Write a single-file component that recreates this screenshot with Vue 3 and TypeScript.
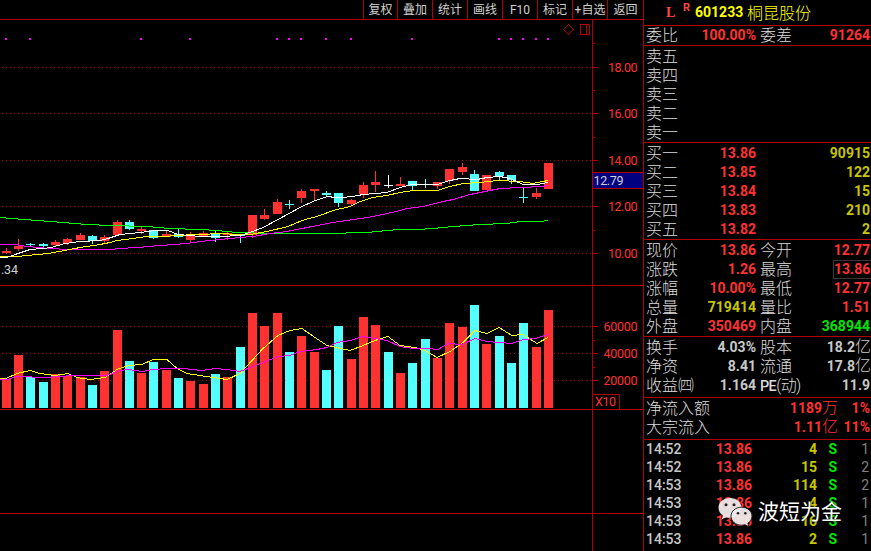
<script setup lang="ts">
type Candle = [x: number, top: number, bottom: number, high: number, low: number, volTop: number, tone: 'u' | 'd' | 'w']
interface Row { label: string; value: string; tone: string; label2?: string; value2?: string; tone2?: string; unit2?: string; boxed?: boolean; latin?: string }

const tools: string[] = ['复权', '叠加', '统计', '画线', 'F10', '标记', '+自选', '返回']

// x, body top, body bottom, wick top, wick bottom, volume top, direction
const candles: Candle[] = [
  [2, 251, 253, 248, 254, 379, 'u'], [14, 246, 249, 239, 251, 355, 'u'], [26, 244, 245, 243, 246, 377, 'd'],
  [39, 244, 246, 243, 247, 382, 'd'], [51, 242, 245, 240, 246, 374, 'u'], [63, 239, 243, 238, 245, 376, 'u'],
  [76, 235, 240, 233, 240, 377, 'u'], [88, 236, 241, 235, 244, 385, 'd'], [100, 237, 241, 235, 243, 371, 'u'],
  [113, 222, 235, 220, 235, 330, 'u'], [125, 222, 229, 220, 230, 361, 'd'], [137, 229, 231, 226, 234, 373, 'u'],
  [149, 230, 238, 230, 239, 362, 'd'], [162, 234, 237, 231, 237, 370, 'u'], [174, 234, 237, 229, 238, 378, 'd'],
  [186, 235, 240, 232, 242, 381, 'u'], [199, 233, 237, 231, 237, 384, 'u'], [211, 234, 238, 231, 242, 374, 'd'],
  [223, 233, 235, 232, 240, 377, 'u'], [236, 235, 236, 235, 243, 347, 'd'], [248, 215, 235, 215, 238, 313, 'u'],
  [260, 215, 219, 209, 220, 326, 'u'], [273, 202, 214, 199, 214, 313, 'u'], [285, 204, 205, 200, 209, 352, 'd'],
  [297, 191, 198, 189, 203, 336, 'u'], [310, 189, 191, 189, 200, 352, 'u'], [322, 193, 195, 191, 196, 370, 'd'],
  [334, 193, 203, 193, 207, 326, 'd'], [347, 200, 204, 199, 206, 359, 'u'], [359, 185, 194, 182, 198, 317, 'u'],
  [371, 182, 185, 171, 192, 325, 'u'], [384, 185, 186, 175, 188, 352, 'w'], [396, 184, 186, 177, 186, 373, 'u'],
  [408, 181, 186, 181, 190, 363, 'd'], [421, 184, 185, 179, 188, 339, 'd'], [433, 182, 186, 182, 189, 358, 'u'],
  [445, 169, 181, 169, 184, 323, 'u'], [458, 167, 172, 163, 175, 327, 'u'], [470, 174, 191, 170, 191, 305, 'd'],
  [482, 175, 190, 175, 190, 344, 'u'], [495, 172, 176, 171, 180, 336, 'd'], [507, 175, 180, 175, 184, 363, 'd'],
  [519, 197, 198, 187, 203, 323, 'd'], [532, 193, 197, 188, 199, 347, 'u'], [544, 163, 189, 163, 189, 310, 'u'],
]
const ink: Record<string, string> = { u: '#ff3232', d: '#54ffff', w: '#ffffff' }
const volInk = (c: Candle): string => (c[0] === 384 ? ink.d : ink[c[6]])

const lines: { color: string; points: string }[] = [
  { color: '#00ff00', points: '0,217 12,218 37,220 63,222 87,224 110,225 147,226 170,228 200,229 217,230 237,232 270,233 343,233 350,232 367,232 387,230 400,229 418,229 433,228 453,226 480,224 507,223 520,221 540,221 548,220' },
  { color: '#ff00ff', points: '0,244 15,244 27,246 50,248 67,249 110,249 120,248 137,247 160,245 187,243 200,241 220,239 240,237 253,236 270,233 287,231 307,227 333,222 347,220 367,217 383,214 400,210 407,208 423,206 443,201 453,199 470,194 490,190 500,188 520,187 543,186 548,185' },
  { color: '#ffff00', points: '0,256 17,256 27,255 48,253 65,250 80,247 100,244 110,242 117,240 133,238 147,236 167,236 173,235 200,234 220,233 237,234 250,234 267,231 288,226 302,220 320,215 333,210 350,206 360,201 373,197 387,195 400,192 413,190 437,190 450,186 463,183 480,182 497,180 520,181 533,183 548,180' },
  { color: '#ffffff', points: '0,257 7,257 15,254 30,249 43,248 51,247 58,245 65,243 80,241 100,240 108,238 120,234 130,233 140,232 155,230 168,230 178,234 190,235 200,236 220,236 240,235 250,232 263,227 278,219 300,207 315,200 328,196 335,197 342,197 353,196 363,194 387,192 400,187 412,184 437,184 450,180 460,178 477,179 487,177 500,176 510,178 523,184 537,184 548,182' },
  { color: '#ffff00', points: '0,378 6,378 17,373 30,370 40,373 55,375 68,373 77,377 90,379 105,377 117,369 128,365 142,364 153,359 167,359 177,368 187,373 200,375 213,377 227,379 240,373 252,360 263,348 278,335 290,330 302,328 315,337 327,345 350,350 363,345 375,340 388,336 400,345 415,347 425,350 437,357 450,351 463,342 475,330 487,333 499,327 512,335 523,334 537,343 548,337' },
  { color: '#ff00ff', points: '0,379 7,379 17,376 47,377 73,375 107,375 120,370 128,369 142,371 153,369 167,368 183,368 202,370 215,368 227,369 240,371 253,366 278,356 290,355 300,351 317,349 327,347 337,342 350,340 363,336 387,340 400,346 413,348 427,348 438,349 448,343 462,344 475,338 487,341 512,343 523,339 535,338 548,334' },
]

const gridRows: number[] = [67, 113, 160, 206, 253, 326, 353, 380]
const minorTicks: number[] = [43, 90, 137, 230, 340, 367]
const signals: number[] = [5, 29, 140, 189, 276, 288, 300, 325, 350, 411, 498, 510, 522, 535, 547]
const axis: { y: number; text: string }[] = [
  { y: 72, text: '18.00' }, { y: 118, text: '16.00' }, { y: 165, text: '14.00' }, { y: 211, text: '12.00' }, { y: 258, text: '10.00' },
  { y: 331, text: '60000' }, { y: 358, text: '40000' }, { y: 385, text: '20000' },
]

const blocks: Row[][] = [
  ['卖五', '卖四', '卖三', '卖二', '卖一'].map((label) => ({ label, value: '', tone: 'red' })),
  [
    { label: '买一', value: '13.86', tone: 'red', value2: '90915', tone2: 'olive' },
    { label: '买二', value: '13.85', tone: 'red', value2: '122', tone2: 'olive' },
    { label: '买三', value: '13.84', tone: 'red', value2: '15', tone2: 'olive' },
    { label: '买四', value: '13.83', tone: 'red', value2: '210', tone2: 'olive' },
    { label: '买五', value: '13.82', tone: 'red', value2: '2', tone2: 'olive' },
  ],
  [
    { label: '现价', value: '13.86', tone: 'red', label2: '今开', value2: '12.77', tone2: 'red' },
    { label: '涨跌', value: '1.26', tone: 'red', label2: '最高', value2: '13.86', tone2: 'red', boxed: true },
    { label: '涨幅', value: '10.00%', tone: 'red', label2: '最低', value2: '12.77', tone2: 'red' },
    { label: '总量', value: '719414', tone: 'olive', label2: '量比', value2: '1.51', tone2: 'red' },
    { label: '外盘', value: '350469', tone: 'red', label2: '内盘', value2: '368944', tone2: 'green' },
  ],
  [
    { label: '换手', value: '4.03%', tone: 'grey', label2: '股本', value2: '18.2', tone2: 'grey', unit2: '亿' },
    { label: '净资', value: '8.41', tone: 'grey', label2: '流通', value2: '17.8', tone2: 'grey', unit2: '亿' },
    { label: '收益㈣', value: '1.164', tone: 'grey', label2: '(动)', latin: 'PE', value2: '11.9', tone2: 'grey' },
  ],
]

const flows = [
  { label: '净流入额', value: '1189', unit: '万', share: '1%' },
  { label: '大宗流入', value: '1.11', unit: '亿', share: '11%' },
]

const trades = [
  { time: '14:52', volume: '4', count: '1' }, { time: '14:52', volume: '15', count: '2' },
  { time: '14:53', volume: '114', count: '2' }, { time: '14:53', volume: '4', count: '1' },
  { time: '14:53', volume: '16', count: '1' }, { time: '14:53', volume: '2', count: '1' },
]
</script>

<template>
  <div class="terminal">
    <main class="left">
      <nav class="toolbar">
        <button v-for="t in tools" :key="t" class="tool">{{ t }}</button>
      </nav>
      <svg class="chart" width="643" height="531" viewBox="0 20 643 531" shape-rendering="crispEdges">
        <path v-for="y in gridRows" :key="'g' + y" :d="`M2 ${y + 0.5}H592`" stroke="#b00000" stroke-dasharray="1 3" />
        <rect v-for="x in signals" :key="'s' + x" :x="x" y="38" width="2" height="2" fill="#ff00ff" />
        <g v-for="c in candles" :key="c[0]">
          <rect :x="c[0] + 4" :y="c[3]" width="1" :height="c[4] - c[3]" :fill="ink[c[6]]" />
          <rect :x="c[0]" :y="c[1]" width="9" :height="c[2] - c[1]" :fill="ink[c[6]]" />
          <rect :x="c[0]" :y="c[5]" width="9" :height="408 - c[5]" :fill="volInk(c)" />
        </g>
        <g transform="translate(0 .5)">
          <polyline v-for="(l, i) in lines" :key="'l' + i" :points="l.points" :stroke="l.color" fill="none" />
        </g>
        <g stroke="#b00000" fill="none">
          <path d="M592.5 20V551M0 285.5H643M0 409.5H643M0 513.5H643" />
          <path v-for="y in gridRows" :key="'t' + y" :d="`M593 ${y + 0.5}h5`" />
          <path v-for="y in minorTicks" :key="'m' + y" :d="`M593 ${y + 0.5}h2`" />
          <path d="M568.5 24.5L563.5 29.5L568.5 34.5L573.5 29.5Z" />
          <path d="M580.5 24.5H589.5V34.5H580.5ZM586.5 24V35" />
          <path d="M593 394.5H619.5V409" />
        </g>
        <rect x="592.5" y="172.5" width="51" height="16" fill="#000080" stroke="#b00000" />
        <g class="axis">
          <text v-for="a in axis" :key="a.text" :x="a.text.includes('.') ? 608 : 603.5" :y="a.y" :textLength="a.text.includes('.') ? 29.5 : 34">{{ a.text }}</text>
          <text x="595" y="406" textLength="21">X10</text>
          <text class="pale" x="593.5" y="184.5" textLength="30">12.79</text>
          <text class="pale" x="1" y="274" textLength="17">.34</text>
        </g>
      </svg>
    </main>

    <aside class="panel">
      <header class="title">
        <span class="mark-l">L</span><sup class="mark-r">R</sup><span class="code">601233</span><span class="name">桐昆股份</span>
      </header>
      <section class="block ratio">
        <div class="row">
          <span class="label">委比</span><b class="red">100.00%</b><span class="label second">委差</span><b class="red">91264</b>
        </div>
      </section>
      <section v-for="(rows, i) in blocks" :key="i" class="block" :class="'block-' + i">
        <div v-for="r in rows" :key="r.label" class="row">
          <span class="label">{{ r.label }}</span>
          <b :class="r.tone">{{ r.value }}</b>
          <span class="label second" :class="{ tight: r.latin }"><em v-if="r.latin">{{ r.latin }}</em>{{ r.label2 }}</span>
          <b :class="[r.tone2, { boxed: r.boxed, unitful: r.unit2 }]">{{ r.value2 }}<i v-if="r.unit2">{{ r.unit2 }}</i></b>
        </div>
      </section>
      <section class="block flows">
        <div v-for="f in flows" :key="f.label" class="row flow">
          <span class="label">{{ f.label }}</span><b class="red">{{ f.value }}<i>{{ f.unit }}</i></b><b class="red">{{ f.share }}</b>
        </div>
      </section>
      <section class="trades">
        <div v-for="(t, i) in trades" :key="i" class="trade">
          <b class="grey time">{{ t.time }}</b><b class="red">13.86</b><b class="olive">{{ t.volume }}</b><b class="green side">S</b><span class="count">{{ t.count }}</span>
        </div>
      </section>
    </aside>

    <div class="brand">
      <svg width="35" height="30" viewBox="0 0 35 30">
        <path d="M12 1C5.500 1 .5 5.300 .5 10.800c0 3.200 1.700 6 4.400 7.800L3.600 22.500l4.500-2.300c1.200.4 2.500.5 3.900.5 6.400 0 11.500-4.300 11.500-9.900S18.400 1 12 1Z" fill="#f2eaea" fill-opacity=".95" />
        <path d="M23.500 10.200c-5.900 0-10.500 4-10.500 9s4.600 9 10.500 9c1.200 0 2.300-.2 3.400-.5l4 2-1.100-3.500c2.600-1.600 4.200-4.100 4.200-7 0-5-4.600-9-10.500-9Z" fill="#f2eaea" fill-opacity=".95" stroke="#222" stroke-width="1" />
        <g fill="#222"><circle cx="8" cy="7.800" r="1.500" /><circle cx="16" cy="7.800" r="1.500" /><circle cx="20" cy="16.300" r="1.300" /><circle cx="27.300" cy="16.300" r="1.300" /></g>
      </svg>
      <span>波短为金</span>
    </div>
  </div>
</template>

<style>
body { background: #000; overflow: hidden; }
</style>

<style scoped>
.terminal { position: relative; display: flex; width: 871px; height: 551px; overflow: hidden; background: #000; color: #c0c0c0; font-family: Roboto, "Noto Sans CJK SC", sans-serif; }
.left { display: flex; flex-direction: column; width: 643px; }
.toolbar { display: flex; justify-content: flex-end; box-sizing: border-box; height: 20px; border-bottom: 1px solid #b00000; }
.tool { box-sizing: border-box; width: 35px; height: 19px; padding: 0; border: 0; border-left: 1px solid #b00000; background: none; color: #d0d0d0; font: 400 12px/18px Roboto, "Noto Sans CJK SC", sans-serif; text-align: center; white-space: nowrap; }
.tool:first-child { width: 34px; }
.tool:last-child { width: 36px; }
.chart { display: block; }
.axis { fill: #ff3232; font-size: 12.5px; }
.axis .pale { fill: #d0d0d0; }

.panel { box-sizing: border-box; width: 228px; border-left: 1px solid #b00000; }
.title { display: flex; align-items: center; box-sizing: border-box; height: 25px; padding: 0 0 1px 22px; color: #ffff00; white-space: nowrap; }
.mark-l { width: 17px; padding-top: 2px; color: #ff4545; font: bold 14px "Liberation Serif", serif; }
.mark-r { width: 12px; margin-top: -8px; color: #ff4545; font-size: 11px; font-weight: bold; line-height: 12px; }
.code { width: 52px; font-size: 14px; font-weight: bold; }
.name { font-size: 16px; font-weight: 300; }
.block { box-sizing: border-box; border-top: 1px solid #b00000; padding-top: 1px; }
.ratio { height: 20px; padding-top: 0; }
.block-0, .block-1, .block-2 { height: 97px; }
.block-3 { height: 61px; }
.flows { height: 42px; }
.row { display: grid; grid-template-columns: 32px 78px 49px 65px; box-sizing: border-box; height: 19px; padding-left: 2px; line-height: 19px; white-space: nowrap; }
.label { color: #dcdcdc; font-size: 16px; font-weight: 300; }
.label em { font-size: 14.4px; font-style: normal; font-weight: 500; }
.second { padding-left: 4px; }
.tight { letter-spacing: -.6px; }
b { font-size: 14px; text-align: right; line-height: 19px; }
i { font-size: 16px; line-height: 17px; font-style: normal; font-weight: 300; }
.unitful { margin-right: -1px; }
.red { color: #ff3232; }
.olive { color: #c6c600; }
.green { color: #00e600; }
.grey { color: #c8c8c8; }
.boxed { box-sizing: border-box; justify-self: end; width: 38px; height: 19px; margin-right: -1px; padding-right: 1px; border: 1px solid #383636; border-right: 0; line-height: 17px; }
.flow { grid-template-columns: 66px 126px 32px; }
.trades { border-top: 1px solid #b00000; }
.trade { display: grid; grid-template-columns: 39px 67px 65px 20px 32px; height: 18px; padding-left: 2px; line-height: 19px; }
.trade b { line-height: 19px; }
.trade .time { font-weight: 500; text-align: left; }
.count { color: #808080; font-size: 14px; text-align: right; }
.brand { position: absolute; left: 718px; top: 495px; display: flex; align-items: center; gap: 5px; color: #fff; font-size: 21px; line-height: 34px; text-shadow: 0 0 2px #000; white-space: nowrap; }
</style>
